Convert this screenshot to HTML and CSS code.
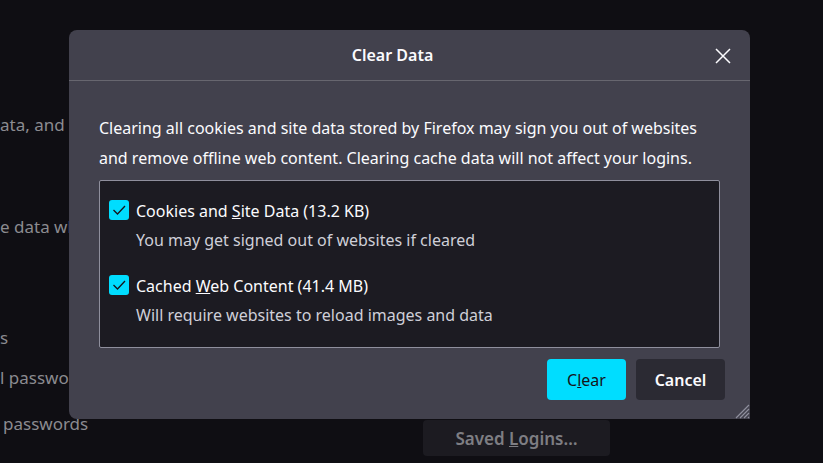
FILE: index.html
```html
<!DOCTYPE html>
<html lang="en">
<head>
  <meta charset="UTF-8">
  <title>Clear Data</title>
  <link rel="stylesheet" href="styles.css">
</head>
<body>
  <!-- Preferences page, dimmed behind the dialog -->
  <div class="prefs">
    <p class="pref-line cut l1">ata, and cache</p>
    <p class="pref-line cut l2">e data when</p>
    <p class="pref-line cut l3">s</p>
    <p class="pref-line cut l4">l passwords</p>
    <div class="pref-row">
      <p class="pref-line">passwords</p>
      <button class="pref-btn">Saved <u>L</u>ogins…</button>
    </div>
  </div>

  <!-- Clear Data dialog -->
  <div class="dialog">
    <div class="dialog-head">
      <span class="dialog-title">Clear Data</span>
      <button class="dialog-close" aria-label="Close">
        <svg width="16" height="16" viewBox="0 0 16 16"><path d="M1 1 L15 15 M15 1 L1 15" stroke="#fbfbfe" stroke-width="1.5" fill="none"/></svg>
      </button>
    </div>
    <div class="dialog-body">
      <p class="intro">Clearing all cookies and site data stored by Firefox may sign you out of websites and remove offline web content. Clearing cache data will not affect your logins.</p>
      <div class="options">
        <div class="option">
          <span class="check"><svg width="20" height="20" viewBox="0 0 20 20"><path d="M4.5 10 L8.5 14 L16 6" stroke="#15141a" stroke-width="1.3" fill="none"/></svg></span>
          <div class="option-text">
            <div class="option-label">Cookies and <u>S</u>ite Data (13.2 KB)</div>
            <div class="option-desc">You may get signed out of websites if cleared</div>
          </div>
        </div>
        <div class="option">
          <span class="check"><svg width="20" height="20" viewBox="0 0 20 20"><path d="M4.5 10 L8.5 14 L16 6" stroke="#15141a" stroke-width="1.3" fill="none"/></svg></span>
          <div class="option-text">
            <div class="option-label">Cached <u>W</u>eb Content (41.4 MB)</div>
            <div class="option-desc">Will require websites to reload images and data</div>
          </div>
        </div>
      </div>
      <div class="actions">
        <button class="btn btn-primary">C<u>l</u>ear</button>
        <button class="btn btn-cancel">Cancel</button>
      </div>
    </div>
    <svg class="grip" width="17" height="17" viewBox="0 0 17 17"><path d="M16 3 L3 16 M16 7 L7 16 M16 11 L11 16 M16 15 L15 16" stroke="#8f8f9d" stroke-width="1.2"/></svg>
  </div>
</body>
</html>
```

FILE: styles.css
```css
/* Page */
body {
  margin: 0;
  height: 463px;
  background: #0f0e13;
  font-family: "Noto Sans", "Open Sans", sans-serif;
  overflow: hidden;
  position: relative;
}
p {
  margin: 0;
}
/* Dimmed preferences behind */
.prefs {
  padding-top: 113px;
}
.pref-line {
  font-size: 17px;
  line-height: 24px;
  color: #8b8b90;
  white-space: nowrap;
}
/* lines that run under the dialog */
.pref-line.cut {
  width: 69px;
  overflow: hidden;
}
.l1 { margin-top: 0; }
.l2 { margin-top: 78px; }
.l3 { margin-top: 87px; }
.l4 { margin-top: 16px; }
.pref-row {
  display: flex;
  align-items: flex-start;
  margin-top: 22px;
}
.pref-row .pref-line {
  padding-left: 3px;
  width: 420px;
}
.pref-btn {
  margin-top: 8px;
  width: 187px;
  height: 36px;
  border: none;
  border-radius: 4px;
  background: #1c1b21;
  color: #7e7e83;
  font-family: inherit;
  font-size: 17px;
  font-weight: 600;
}
/* Dialog */
.dialog {
  position: absolute;
  left: 69px;
  top: 30px;
  width: 681px;
  height: 389px;
  background: #42414d;
  border-radius: 8px 8px 0 8px;
  color: #fbfbfe;
}
.dialog-head {
  height: 50px;
  padding-right: 34px;
  border-bottom: 1px solid #67666f;
  display: flex;
  align-items: center;
  justify-content: center;
  position: relative;
}
.dialog-title {
  font-size: 16px;
  font-weight: 600;
}
.dialog-close {
  position: absolute;
  right: 19px;
  top: 18px;
  width: 16px;
  height: 16px;
  padding: 0;
  border: none;
  background: none;
  display: flex;
}
.dialog-body {
  padding: 32px 30px 0 30px;
}
.intro {
  font-size: 16px;
  line-height: 30px;
}
.options {
  box-sizing: border-box;
  margin-top: 7px;
  height: 168px;
  background: #1c1b22;
  border: 1px solid #8f8f9d;
  border-radius: 2px;
  padding: 19px 9px 0 9px;
}
.option {
  display: flex;
  gap: 7px;
  margin-bottom: 24px;
}
.check {
  flex: none;
  width: 20px;
  height: 20px;
  border-radius: 3px;
  background: #00ddff;
  display: flex;
}
.option-text {
  font-size: 16px;
}
.option-label {
  line-height: 22px;
}
.option-desc {
  margin-top: 7px;
  line-height: 22px;
  color: #cfcfd8;
}
.actions {
  display: flex;
  justify-content: flex-end;
  gap: 10px;
  margin-top: 11px;
  margin-right: -5px;
}
.btn {
  height: 41px;
  border: none;
  border-radius: 4px;
  font-family: inherit;
  font-size: 16px;
}
.btn-primary {
  width: 79px;
  background: #00ddff;
  color: #15141a;
}
.btn-cancel {
  width: 89px;
  background: #2b2a33;
  color: #fbfbfe;
  font-weight: 600;
}
.grip {
  position: absolute;
  right: 0;
  bottom: 0;
}
```
